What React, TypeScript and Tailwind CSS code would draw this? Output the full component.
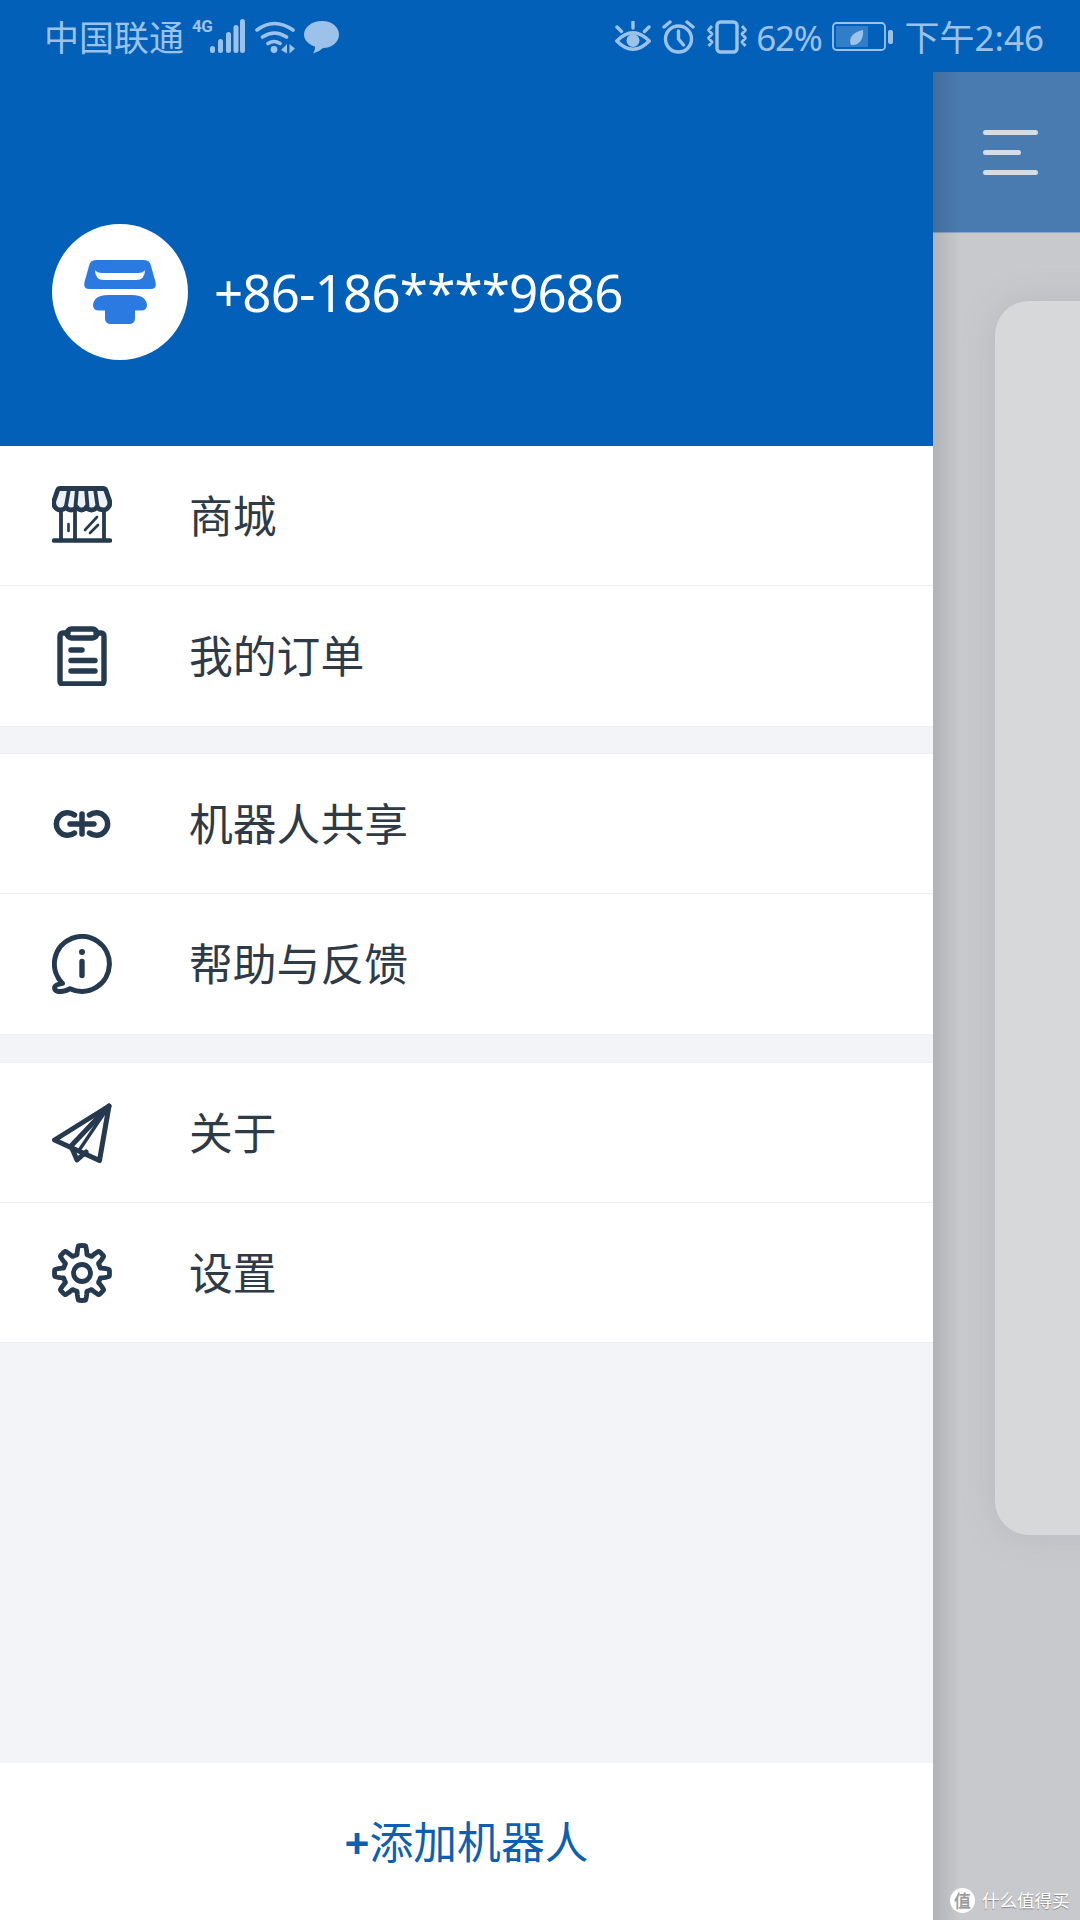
const ink = "#263a4f";
const sc = "#9cc2ea";

function Store() {
  return (
    <svg width="60" height="60" viewBox="0 0 60 60" fill="none" stroke={ink} strokeWidth="4.800" strokeLinecap="round" strokeLinejoin="round">
      <path d="M8 2.500h43q2 0 3 2l3.500 10q1 4-1 6.500-2 3-5 3-4 0-6.500-3-2 3-5.500 3t-5-3q-2 3-5 3t-5-3q-2 3-5.500 3T14 21q-2 3-6 3-3 0-5-3t-1-6.500L5.500 4.500q1-2 2.500-2Z" fill="#eef2f7" />
      <path d="M17 3l-3 17M25 3l-1.500 17M34 3l1.500 17M43 3l2.500 17" strokeWidth="3.800" />
      <path d="M9 24v29M23 24v29M52 24v29" strokeWidth="3.800" />
      <path d="M16.500 38v7M33 44l12-13M38 47l8-8" strokeWidth="2.600" />
      <path d="M2 54.500h56" strokeWidth="4.400" />
    </svg>
  );
}
function Clipboard() {
  return (
    <svg width="60" height="60" viewBox="0 0 60 60" fill="none" stroke={ink} strokeWidth="5.400" strokeLinecap="round" strokeLinejoin="round">
      <path d="M16 7h-5q-3 0-3 4v44q0 3 3 3h38q3 0 3-3V11q0-4-3-4h-5" />
      <rect x="15" y="3" width="30" height="9" rx="4.500" />
      <path d="M19 24h11M19 34.500h24M19 45h24" />
    </svg>
  );
}
function LinkIcon() {
  return (
    <svg width="60" height="60" viewBox="0 0 60 60" fill="none" stroke={ink} strokeWidth="5.400" strokeLinecap="round">
      <path d="M22.500 21A11.300 11.300 0 1 0 22.500 39" />
      <path d="M37.500 21A11.300 11.300 0 1 1 37.500 39" />
      <path d="M18 30h24" />
      <path d="M30 20v20" strokeWidth="5.500" />
    </svg>
  );
}
function InfoBubble() {
  return (
    <svg width="60" height="60" viewBox="0 0 60 60" fill="none" stroke={ink} strokeWidth="5" strokeLinecap="round" strokeLinejoin="round">
      <path d="M18 54.700Q12 58 6.500 57.500 1.500 56.500 3 52.500 4 50.500 10.500 49.400A27.500 27.500 0 1 1 18 54.700Z" />
      <circle cx="30" cy="18" r="3" fill={ink} stroke="none" />
      <path d="M30 27.500v14" strokeWidth="5.400" />
    </svg>
  );
}
function Plane() {
  return (
    <svg width="60" height="60" viewBox="0 0 60 60" fill="none" stroke={ink} strokeWidth="5" strokeLinecap="round" strokeLinejoin="round">
      <path d="M57 3 2.500 37l45 20.500Z" />
      <path d="M57 3 19 43l6 14 9-8" />
      <path d="M57 3 28 46" strokeWidth="3.400" />
    </svg>
  );
}
function gearPath() {
  const pts: string[] = [];
  for (let i = 0; i < 240; i++) {
    const t = (i / 240) * Math.PI * 2;
    const c = Math.cos(8 * t);
    const s = Math.max(-1, Math.min(1, c * 1.9));
    const r = 23.2 + 4.300 * s;
    pts.push(`${(30 + r * Math.sin(t)).toFixed(2)} ${(30 - r * Math.cos(t)).toFixed(2)}`);
  }
  return `M${pts.join("L")}Z`;
}
function Gear() {
  return (
    <svg width="60" height="60" viewBox="0 0 60 60" fill="none" stroke={ink} strokeWidth="4.800" strokeLinejoin="round">
      <path d={gearPath()} />
      <circle cx="30" cy="30" r="8.500" />
    </svg>
  );
}

function Signal() {
  return (
    <div className="relative w-[53px] h-[36px]">
      <span className="absolute left-0 top-[-2px] text-[17px] leading-[18px] font-bold tracking-[-0.500px]" style={{ fontFamily: "Roboto, sans-serif" }}>4G</span>
      <svg width="53" height="36" viewBox="0 0 53 36" fill={sc}>
        <rect x="18" y="27" width="5" height="7" rx="2.500" />
        <rect x="26" y="20" width="5" height="14" rx="2.500" />
        <rect x="34" y="13" width="5" height="21" rx="2.500" />
        <rect x="41.500" y="6" width="5" height="28" rx="2.500" />
        <rect x="48" y="0" width="5" height="34" rx="2.500" />
      </svg>
    </div>
  );
}
function Wifi() {
  return (
    <svg width="40" height="34" viewBox="0 0 40 34" fill="none" stroke={sc} strokeWidth="3.600" strokeLinecap="round">
      <path d="M2 10q17-13 36 0M7.500 17q12-8 24 0M13 23.500q6-4 12 0" />
      <circle cx="19" cy="29.500" r="3.400" fill={sc} stroke="none" />
      <path d="M32 24v9.500l-6-3.500ZM34.500 24v9.500l5.500-5Z" fill={sc} stroke="none" />
    </svg>
  );
}
function Bubble() {
  return (
    <svg width="35" height="33" viewBox="0 0 35 33" fill={sc}>
      <path d="M18 0c10 0 17 6 17 13.500S28 27 19 27q-4 4-10 5.500 2.500-3 2-7C4.500 23.500 0 19 0 13.500 0 6 8 0 18 0Z" />
    </svg>
  );
}
function Eye() {
  return (
    <svg width="36" height="32" viewBox="0 0 36 32" fill="none" stroke={sc} strokeWidth="3.400" strokeLinecap="round">
      <path d="M1.800 20Q18 3.500 34.200 20 18 36.500 1.800 20Z" />
      <circle cx="18" cy="19.500" r="6.500" fill={sc} stroke="none" />
      <path d="M2 6l4.500 4.500M18 1v6M34 6l-4.500 4.500" />
    </svg>
  );
}
function Alarm() {
  return (
    <svg width="33" height="34" viewBox="0 0 33 34" fill="none" stroke={sc} strokeWidth="3.400" strokeLinecap="round" strokeLinejoin="round">
      <circle cx="16.500" cy="19" r="13" />
      <path d="M16.500 11v8l5 6M2 7l6-5M31 7l-6-5" />
    </svg>
  );
}
function Vibrate() {
  return (
    <svg width="42" height="34" viewBox="0 0 42 34" fill="none" stroke={sc} strokeWidth="3.400" strokeLinejoin="round">
      <rect x="11" y="2" width="20" height="30" rx="3.500" />
      <path d="M6 6 2.500 10 6 14l-3.500 4L6 22l-3.500 4M36 6l3.500 4L36 14l3.500 4L36 22l3.500 4" strokeWidth="2.800" />
    </svg>
  );
}
function Battery() {
  return (
    <svg width="61" height="30" viewBox="0 0 61 30" fill="none">
      <rect x="1" y="1" width="52" height="27" rx="3.500" stroke={sc} strokeWidth="1.800" />
      <rect x="4" y="4" width="32" height="21" rx="1" fill={sc} fillOpacity="0.3" />
      <path d="M19 23c-3-7 2-13 12-15 1 9-4 16-12 15Z" fill={sc} />
      <rect x="56" y="8" width="5" height="14" rx="2" fill={sc} />
    </svg>
  );
}

function Row({ icon, label, border = true }: { icon: React.ReactNode; label: string; border?: boolean }) {
  return (
    <div className={`h-[140px] bg-white flex items-center pl-[52px] ${border ? "border-b border-[#eeeef0]" : ""}`}>
      <div className="w-[60px] h-[60px] shrink-0">{icon}</div>
      <span className="ml-[77px] pt-[2px] text-[43.800px] leading-none text-[#2f3a47]">{label}</span>
    </div>
  );
}

function Spacer({ tall = false }: { tall?: boolean }) {
  return <div className={`${tall ? "h-[29px]" : "h-[28px]"} bg-[#f3f4f8] border-y border-[#eeeff3]`} />;
}

export default function App() {
  return (
    <div
      className="w-[1080px] h-[1920px] overflow-hidden flex flex-col bg-[#0360b9]"
      style={{ fontFamily: '"Noto Sans", "Noto Sans CJK SC", sans-serif' }}
    >
      <div className="h-[72px] shrink-0 flex items-center justify-between pl-[44px] pr-[36px] pt-[2px] text-[#9cc2ea] text-[35px] leading-none">
        <div className="flex items-center">
          <span className="whitespace-nowrap">中国联通</span>
          <div className="ml-[8px]"><Signal /></div>
          <div className="ml-[10px]"><Wifi /></div>
          <div className="ml-[9px]"><Bubble /></div>
        </div>
        <div className="flex items-center">
          <Eye />
          <div className="ml-[11px]"><Alarm /></div>
          <div className="ml-[11px]"><Vibrate /></div>
          <span className="ml-[8px] tracking-[-1.300px]">62%</span>
          <div className="ml-[10px]"><Battery /></div>
          <span className="ml-[12px] whitespace-nowrap">下午2:46</span>
        </div>
      </div>

      <div className="flex-1 flex min-h-0">
        <div className="w-[933px] shrink-0 flex flex-col bg-[#f3f4f8]">
          <div className="h-[374px] shrink-0 bg-[#0360b9] flex items-center pl-[52px] pt-[66px]">
            <div className="w-[136px] h-[136px] rounded-full bg-white flex items-center justify-center">
              <svg width="72" height="64" viewBox="0 0 72 64" fill="#2a7ae2">
                <path fillRule="evenodd" d="M12 0h48q6 0 7 6l4.500 16q1.500 7-5 7H5.500q-6.500 0-5-7L5 6q1-6 7-6ZM11 10q0 10 9 10h32q9 0 9-10-2 3-7 3H18q-5 0-7-3Z" />
                <path d="M24 35h24q14 0 15 10 0 5.500-6 5.500h-6V58q0 6-6 6H27q-6 0-6-6v-7.500h-6q-6 0-6-5.500 1-10 15-10Z" />
              </svg>
            </div>
            <span className="ml-[26px] text-[51px] leading-none tracking-[-0.800px] text-white whitespace-nowrap">+86-186****9686</span>
          </div>

          <Row icon={<Store />} label="商城" />
          <Row icon={<Clipboard />} label="我的订单" border={false} />
          <Spacer />
          <Row icon={<LinkIcon />} label="机器人共享" />
          <Row icon={<InfoBubble />} label="帮助与反馈" border={false} />
          <Spacer tall />
          <Row icon={<Plane />} label="关于" />
          <Row icon={<Gear />} label="设置" />

          <div className="flex-1" />

          <div className="h-[157px] shrink-0 bg-white flex items-center justify-center pt-[2px] text-[#0f5fb0] text-[43.800px] leading-none">
            <span className="font-bold">+</span>
            <span>添加机器人</span>
          </div>
        </div>

        <div className="relative flex-1 min-w-0 flex flex-col bg-[#c8c9cd] overflow-hidden">
          <div className="h-[161px] shrink-0 bg-[#4a7bb0] border-b border-[#86a6cb] flex flex-col justify-center gap-[15px] pl-[50px]">
            <div className="w-[55px] h-[5px] rounded-full bg-[#d6dce4]" />
            <div className="w-[38px] h-[5px] rounded-full bg-[#d6dce4]" />
            <div className="w-[55px] h-[5px] rounded-full bg-[#d6dce4]" />
          </div>
          <div className="ml-[62px] mt-[68px] w-[200px] h-[1234px] rounded-l-[34px] bg-[#d7d8da] shadow-[0_0_30px_rgba(150,155,165,0.35)]" />
          <div className="absolute inset-y-0 left-0 w-[28px] bg-gradient-to-r from-[#0000001c] to-transparent" />
          <div className="absolute left-[17px] bottom-[7px] flex items-center text-white [text-shadow:0_1px_1px_rgba(0,0,0,0.35)]">
            <span className="w-[25px] h-[25px] rounded-full bg-white text-[#9a9a9a] text-[17px] leading-none flex items-center justify-center">值</span>
            <span className="ml-[7px] text-[17.500px] leading-none whitespace-nowrap">什么值得买</span>
          </div>
        </div>
      </div>
    </div>
  );
}
